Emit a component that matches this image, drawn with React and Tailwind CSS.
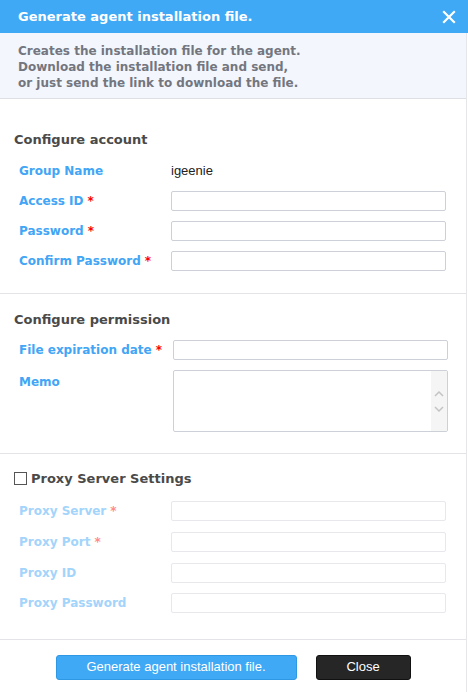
import React, { useState } from 'react'

const verdana = { fontFamily: '"DejaVu Sans", Verdana, sans-serif' }

const Req = ({ dim }) => (
  <span className={dim ? 'text-[#ff8a8a] ml-1' : 'text-[#ff0000] ml-1'}>*</span>
)

const Row = ({ label, required, dim, children, offset, tall }) => (
  <div className={`flex items-center pl-[19px] ${tall ? 'h-[31px]' : 'h-[30px]'}`}>
    <div
      className={`shrink-0 text-[12px] font-bold ${dim ? 'text-[#a3d4fb]' : 'text-[#42a5f5]'} ${offset ? 'w-[154px]' : 'w-[152px]'}`}
      style={verdana}
    >
      {label}
      {required && <Req dim={dim} />}
    </div>
    {children}
  </div>
)

const Input = ({ dim }) => (
  <input
    disabled={dim}
    className={`h-[20px] w-[275px] rounded-[2px] border bg-white outline-none ${dim ? 'border-[#e6e8ec]' : 'border-[#cdd0d6]'}`}
  />
)

export default function App() {
  const [proxy, setProxy] = useState(false)

  return (
    <div className="w-[468px] h-[692px] bg-white flex flex-col overflow-hidden">
      {/* Header */}
      <div className="h-[33px] bg-[#3fa9f5] flex items-center justify-between pl-[18px] pr-[12px]">
        <span className="text-white text-[13px] font-bold" style={verdana}>
          Generate agent installation file.
        </span>
        <svg width="14" height="14" viewBox="0 0 14 14">
          <path d="M2 2 L12 12 M12 2 L2 12" stroke="white" strokeWidth="2.2" strokeLinecap="square" />
        </svg>
      </div>

      <div className="flex-1 flex flex-col border-r border-[#e4e6ea] mr-[1px]">
        {/* Description */}
        <div
          className="bg-[#f3f6fd] border-b border-[#dcdfe4] px-[18px] pt-[10px] pb-[7px] text-[12px] leading-[16px] font-bold text-[#73767f]"
          style={verdana}
        >
          <p>Creates the installation file for the agent.</p>
          <p>Download the installation file and send,</p>
          <p>or just send the link to download the file.</p>
        </div>

        {/* Configure account */}
        <div className="border-b border-[#e2e4e8] pt-[31px] pb-[17px]">
          <h3 className="pl-[14px] text-[13px] font-bold text-[#4a4a4a] mb-[6px]" style={verdana}>
            Configure account
          </h3>
          <Row label="Group Name">
            <span className="text-[13px] text-[#222]" style={{ fontFamily: '"Liberation Sans", Arial, sans-serif' }}>
              igeenie
            </span>
          </Row>
          <Row label="Access ID" required>
            <Input />
          </Row>
          <Row label="Password" required>
            <Input />
          </Row>
          <Row label="Confirm Password" required>
            <Input />
          </Row>
        </div>

        {/* Configure permission */}
        <div className="border-b border-[#e2e4e8] pt-[16px] pb-[21px]">
          <h3 className="pl-[14px] text-[13px] font-bold text-[#4a4a4a] mb-[6px]" style={verdana}>
            Configure permission
          </h3>
          <Row label="File expiration date" required offset>
            <Input />
          </Row>
          <div className="flex items-start pl-[19px] mt-[5px]">
            <div className="w-[154px] pt-[3px] text-[12px] font-bold text-[#42a5f5]" style={verdana}>
              Memo
            </div>
            <div className="w-[275px] h-[62px] rounded-[2px] border border-[#cdd0d6] bg-white flex">
              <textarea className="flex-1 resize-none outline-none bg-transparent" />
              <div className="w-[16px] bg-[#f5f5f5] flex flex-col items-center justify-center gap-[9px]">
                <svg width="10" height="6" viewBox="0 0 10 6">
                  <path d="M1 5 L5 1 L9 5" fill="none" stroke="#c4c4c4" strokeWidth="1.5" />
                </svg>
                <svg width="10" height="6" viewBox="0 0 10 6">
                  <path d="M1 1 L5 5 L9 1" fill="none" stroke="#c4c4c4" strokeWidth="1.5" />
                </svg>
              </div>
            </div>
          </div>
        </div>

        {/* Proxy */}
        <div className="border-b border-[#e2e4e8] pt-[15px] pb-[20px]">
          <label className="flex items-center pl-[14px] mb-[7px] cursor-pointer">
            <input
              type="checkbox"
              checked={proxy}
              onChange={(e) => setProxy(e.target.checked)}
              className="appearance-none w-[13px] h-[13px] border border-[#555] bg-white mr-[4px]"
            />
            <span className="text-[13px] font-bold text-[#4a4a4a]" style={verdana}>
              Proxy Server Settings
            </span>
          </label>
          <Row label="Proxy Server" required dim={!proxy} tall>
            <Input dim={!proxy} />
          </Row>
          <Row label="Proxy Port" required dim={!proxy} tall>
            <Input dim={!proxy} />
          </Row>
          <Row label="Proxy ID" dim={!proxy}>
            <Input dim={!proxy} />
          </Row>
          <Row label="Proxy Password" dim={!proxy} tall>
            <Input dim={!proxy} />
          </Row>
        </div>

        {/* Footer */}
        <div
          className="flex justify-center gap-[19px] pt-[15px]"
          style={{ fontFamily: '"Liberation Sans", Arial, sans-serif' }}
        >
          <button className="w-[241px] h-[25px] rounded-[3px] bg-[#3fa9f5] border border-[#2f98e4] text-white text-[13px]">
            Generate agent installation file.
          </button>
          <button className="w-[95px] h-[25px] rounded-[3px] bg-[#262626] border border-[#111] text-white text-[13px]">
            Close
          </button>
        </div>
      </div>
    </div>
  )
}
